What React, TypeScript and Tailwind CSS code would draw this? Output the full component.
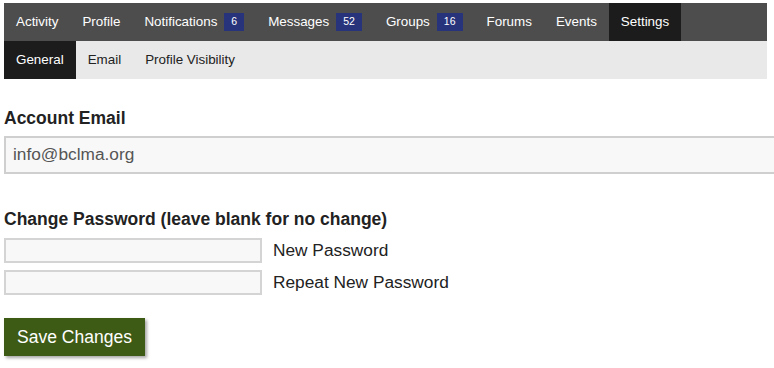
import React from "react";

type NavItem = { label: string; count?: number; active?: boolean };

const mainNav: NavItem[] = [
  { label: "Activity" },
  { label: "Profile" },
  { label: "Notifications", count: 6 },
  { label: "Messages", count: 52 },
  { label: "Groups", count: 16 },
  { label: "Forums" },
  { label: "Events" },
  { label: "Settings", active: true },
];

const subNav: NavItem[] = [
  { label: "General", active: true },
  { label: "Email" },
  { label: "Profile Visibility" },
];

export default function App() {
  return (
    <div className="w-[774px] h-[368px] bg-white overflow-hidden font-['Liberation_Sans',Arial,sans-serif]">
      <div className="pt-[3px] pl-1 w-[767px]">
        {/* Main nav */}
        <div className="flex h-[38px] bg-[#4d4d4d]">
          {mainNav.map((item) => (
            <div
              key={item.label}
              className={`flex items-center px-3 text-[13.4px] text-white ${item.active ? "bg-[#1c1c1c]" : ""}`}
            >
              <span>{item.label}</span>
              {item.count !== undefined && (
                <span className="ml-[7px] flex h-[18px] items-center bg-[#27337a] px-[7px] text-[10.5px] text-white">
                  {item.count}
                </span>
              )}
            </div>
          ))}
        </div>

        {/* Sub nav */}
        <div className="flex h-[38px] bg-[#e9e9e9]">
          {subNav.map((item) => (
            <div
              key={item.label}
              className={`flex items-center px-3 text-[13.4px] ${item.active ? "bg-[#1c1c1c] text-white" : "text-[#222]"}`}
            >
              {item.label}
            </div>
          ))}
        </div>
      </div>

      <div className="pl-1 pt-[29px] text-[#222]">
        <h3 className="text-[17.5px] font-bold leading-5">Account Email</h3>
        <div className="mt-[8px] flex h-[38px] w-[790px] items-center border-2 border-[#cfcfcf] bg-[#f8f8f8] pl-[7px] text-[17.3px] text-[#555]">
          info@bclma.org
        </div>

        <h3 className="mt-[35px] text-[17.5px] font-bold leading-5">
          Change Password (leave blank for no change)
        </h3>
        <div className="mt-[9px] flex flex-col gap-[6px]">
          <div className="flex items-center">
            <div className="h-[25px] w-[258px] border-2 border-[#d4d4d4] bg-[#f8f8f8]" />
            <span className="ml-[11px] text-[17.3px]">New Password</span>
          </div>
          <div className="flex items-center">
            <div className="h-[25px] w-[258px] border-2 border-[#d4d4d4] bg-[#f8f8f8]" />
            <span className="ml-[11px] text-[17.3px]">Repeat New Password</span>
          </div>
        </div>

        <button className="mt-[22px] h-[38px] w-[141px] bg-[#3e5b16] text-[17.5px] text-white shadow-[2px_2px_3px_rgba(0,0,0,0.35)]">
          Save Changes
        </button>
      </div>
    </div>
  );
}
